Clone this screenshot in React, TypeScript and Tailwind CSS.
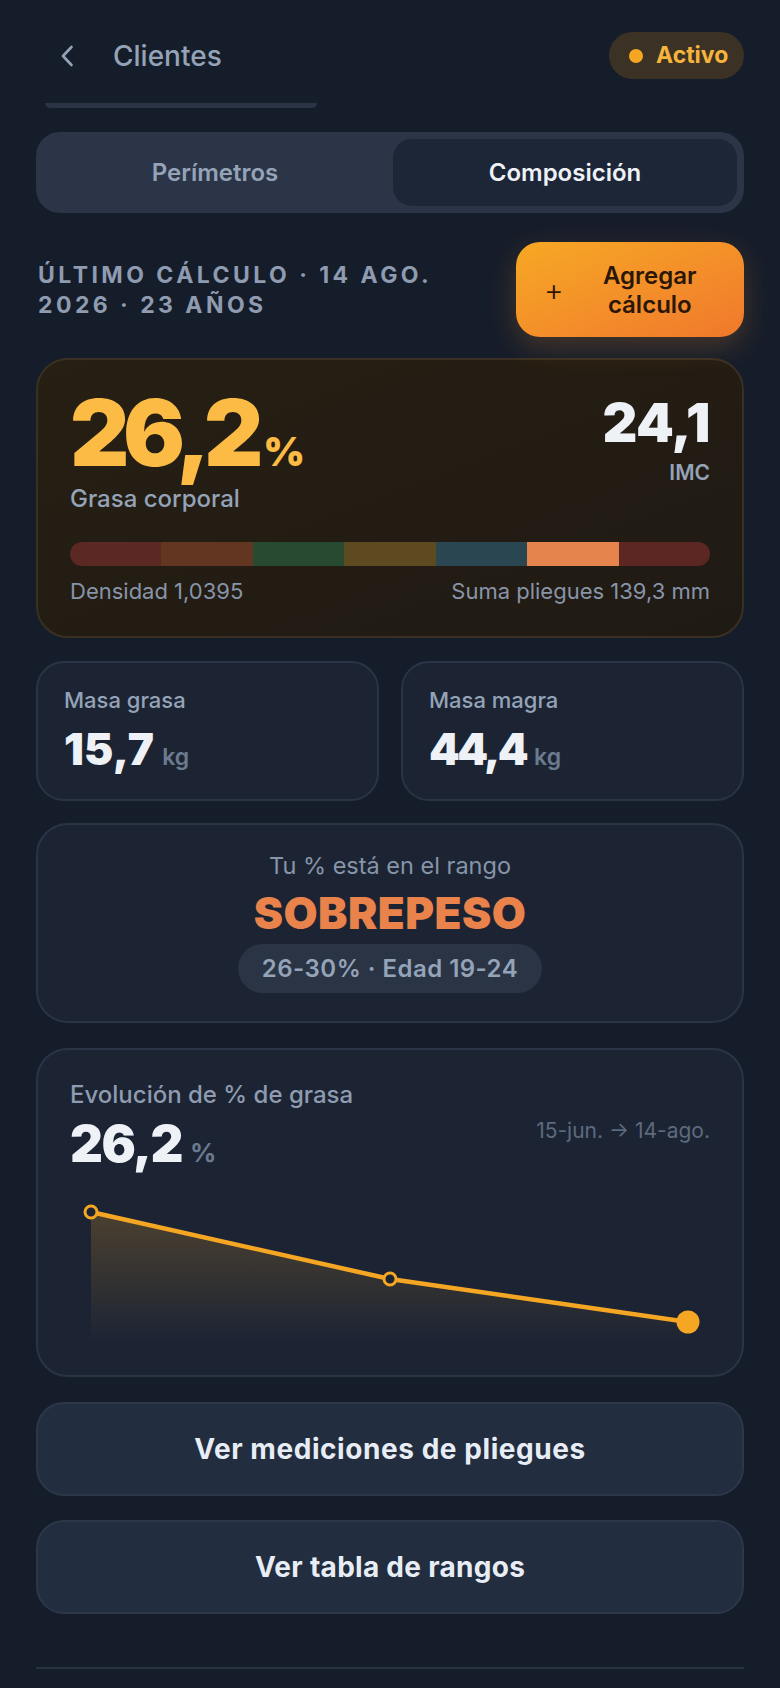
import React from "react";

const segs = ["#5b2824", "#623620", "#284a30", "#5e4a20", "#2a4651", "#e5854d", "#5c2723"];

export default function App() {
  return (
    <div className="min-h-[1688px] w-[780px] bg-[#161d2a] font-[Inter,'Noto_Sans',sans-serif] px-[36px] pb-[19px]">
      {/* header */}
      <div className="pt-[32px] h-[79px] flex items-center justify-between">
        <div className="flex items-center h-[47px]">
          <svg className="ml-[24px]" width="14" height="22" viewBox="0 0 14 22" fill="none">
            <path d="M11.5 2 L3 11 L11.5 20" stroke="#94a3b8" strokeWidth="2.6" strokeLinecap="round" strokeLinejoin="round" />
          </svg>
          <span className="ml-[39px] text-[28px] font-medium text-[#94a3b8] leading-none">Clientes</span>
        </div>
        <div className="h-[47px] w-[135px] rounded-full bg-[#3b3225] flex items-center pl-[20px] gap-[13px]">
          <span className="w-[14px] h-[14px] rounded-full bg-[#f5a623]" />
          <span className="text-[23px] font-bold text-[#f6b43c] leading-none">Activo</span>
        </div>
      </div>
      <div className="mt-[24px] ml-[9px] w-[272px] h-[5px] rounded-b-full bg-[#2a3446]" />

      {/* tabs */}
      <div className="mt-[24px] h-[81px] rounded-[24px] bg-[#2b3547] p-[7px] grid grid-cols-2 gap-[6px]">
        <div className="flex items-center justify-center text-[24px] font-semibold text-[#94a3b8]">Perímetros</div>
        <div className="flex items-center justify-center rounded-[19px] bg-[#1d2637] text-[24px] font-semibold text-[#eef2f8]">Composición</div>
      </div>

      {/* section header */}
      <div className="mt-[29px] flex items-center gap-[24px]">
        <div className="flex-1 pl-[2px] text-[23px] font-bold uppercase tracking-[0.15em] leading-[30px] text-[#8e9bb0]">
          Último cálculo · 14 ago. 2026 · 23 años
        </div>
        <button className="w-[228px] h-[95px] rounded-[24px] bg-gradient-to-br from-[#f6a824] to-[#f0782c] shadow-[0_10px_28px_rgba(240,140,40,0.22)] flex items-center pl-[28px] pr-[32px]">
          <span className="text-[30px] font-light text-[#2a1707] leading-none">+</span>
          <span className="flex-1 ml-[24px] text-center text-[24px] font-semibold leading-[29px] text-[#2a1707]">
            Agregar
            <br />
            cálculo
          </span>
        </button>
      </div>

      {/* main card */}
      <div className="mt-[21px] h-[280px] rounded-[32px] border-2 border-[#3a3021] bg-gradient-to-br from-[#271f13] to-[#1f1a14] px-[32px] pt-[27px]">
        <div className="flex justify-between items-start">
          <div>
            <div className="leading-none text-[#fbbb44] font-black">
              <span className="text-[92px] tracking-[-0.07em]">26,2</span>
              <span className="text-[40px] ml-[6px]">%</span>
            </div>
            <div className="mt-[6px] text-[24px] leading-[1.2] font-medium text-[#94a3b8]">Grasa corporal</div>
          </div>
          <div className="text-right mt-[9px]">
            <div className="text-[54px] leading-none font-black tracking-[-0.01em] text-[#eef2f7]">24,1</div>
            <div className="mt-[10px] text-[21px] leading-[1.2] font-semibold text-[#94a3b8]">IMC</div>
          </div>
        </div>
        <div className="mt-[28px] h-[24px] rounded-full overflow-hidden flex">
          {segs.map((c, i) => (
            <div key={i} className="flex-1 h-full" style={{ background: c }} />
          ))}
        </div>
        <div className="mt-[12px] flex justify-between text-[22px] leading-[1.2] text-[#8894a8]">
          <span>Densidad 1,0395</span>
          <span>Suma pliegues 139,3 mm</span>
        </div>
      </div>

      {/* masa cards */}
      <div className="mt-[23px] grid grid-cols-2 gap-[22px]">
        {[
          ["Masa grasa", "15,7", "tracking-[0.005em]"],
          ["Masa magra", "44,4", "tracking-[-0.06em]"],
        ].map(([l, v, t]) => (
          <div key={l} className="h-[140px] rounded-[28px] border-2 border-[#2b3446] bg-[#1c2433] px-[26px] pt-[24px]">
            <div className="text-[22px] leading-[1.2] font-medium text-[#94a3b8]">{l}</div>
            <div className="mt-[14px] leading-none flex items-baseline">
              <span className={"text-[44px] font-black text-[#eef2f7] " + t}>{v}</span>
              <span className="ml-[8px] text-[23px] font-semibold text-[#6b7a8f]">kg</span>
            </div>
          </div>
        ))}
      </div>

      {/* range card */}
      <div className="mt-[22px] h-[200px] rounded-[32px] border-2 border-[#2b3446] bg-[#1c2433] pt-[27px] flex flex-col items-center">
        <div className="text-[23.5px] leading-[1.2] text-[#8795a9]">Tu % está en el rango</div>
        <div className="mt-[11px] text-[44px] leading-none font-black tracking-[0.01em] text-[#e9834b]">SOBREPESO</div>
        <div className="mt-[9px] h-[49px] px-[24px] rounded-full bg-[#2a3445] flex items-center text-[24px] font-semibold tracking-[0.02em] text-[#94a3b8]">
          26-30% · Edad 19-24
        </div>
      </div>

      {/* chart card */}
      <div className="mt-[25px] h-[329px] rounded-[32px] border-2 border-[#2b3446] bg-[#1c2433] px-[32px] pt-[31px]">
        <div className="text-[24px] leading-[1.2] font-medium text-[#8e9bb0]">Evolución de % de grasa</div>
        <div className="mt-[8px] flex justify-between items-start">
          <div className="leading-none flex items-baseline">
            <span className="text-[51px] font-black tracking-[-0.03em] text-[#eef2f7]">26,2</span>
            <span className="ml-[8px] text-[26px] font-bold text-[#6b7a8f]">%</span>
          </div>
          <div className="text-[21px] leading-[1.2] text-[#5c6a7f]">15-jun. → 14-ago.</div>
        </div>
        <svg className="mt-[23px] block" width="640" height="150" viewBox="0 0 640 150">
          <defs>
            <linearGradient id="ar" x1="0" y1="0" x2="0" y2="1">
              <stop offset="0" stopColor="#f5a623" stopOpacity="0.22" />
              <stop offset="1" stopColor="#f5a623" stopOpacity="0" />
            </linearGradient>
          </defs>
          <path d="M21 20 L320 87 L618 130 L618 150 L21 150 Z" fill="url(#ar)" />
          <path d="M21 20 L320 87 L618 130" fill="none" stroke="#f5a623" strokeWidth="4.5" strokeLinejoin="round" />
          <circle cx="21" cy="20" r="6" fill="#1c2433" stroke="#f5a623" strokeWidth="3" />
          <circle cx="320" cy="87" r="6" fill="#1c2433" stroke="#f5a623" strokeWidth="3" />
          <circle cx="618" cy="130" r="11.5" fill="#f5a623" />
        </svg>
      </div>

      {/* buttons */}
      <div className="mt-[25px] flex flex-col gap-[24px]">
        <button className="h-[94px] rounded-[28px] border-2 border-[#2c374a] bg-[#222d3f] text-[28px] font-bold tracking-[0.02em] text-[#e8edf5]">
          Ver mediciones de pliegues
        </button>
        <button className="h-[94px] rounded-[28px] border-2 border-[#2c374a] bg-[#222d3f] text-[28px] font-bold tracking-[0.01em] text-[#e8edf5]">
          Ver tabla de rangos
        </button>
      </div>

      <div className="mt-[53px] h-[2px] bg-[#29333f]" />
    </div>
  );
}
